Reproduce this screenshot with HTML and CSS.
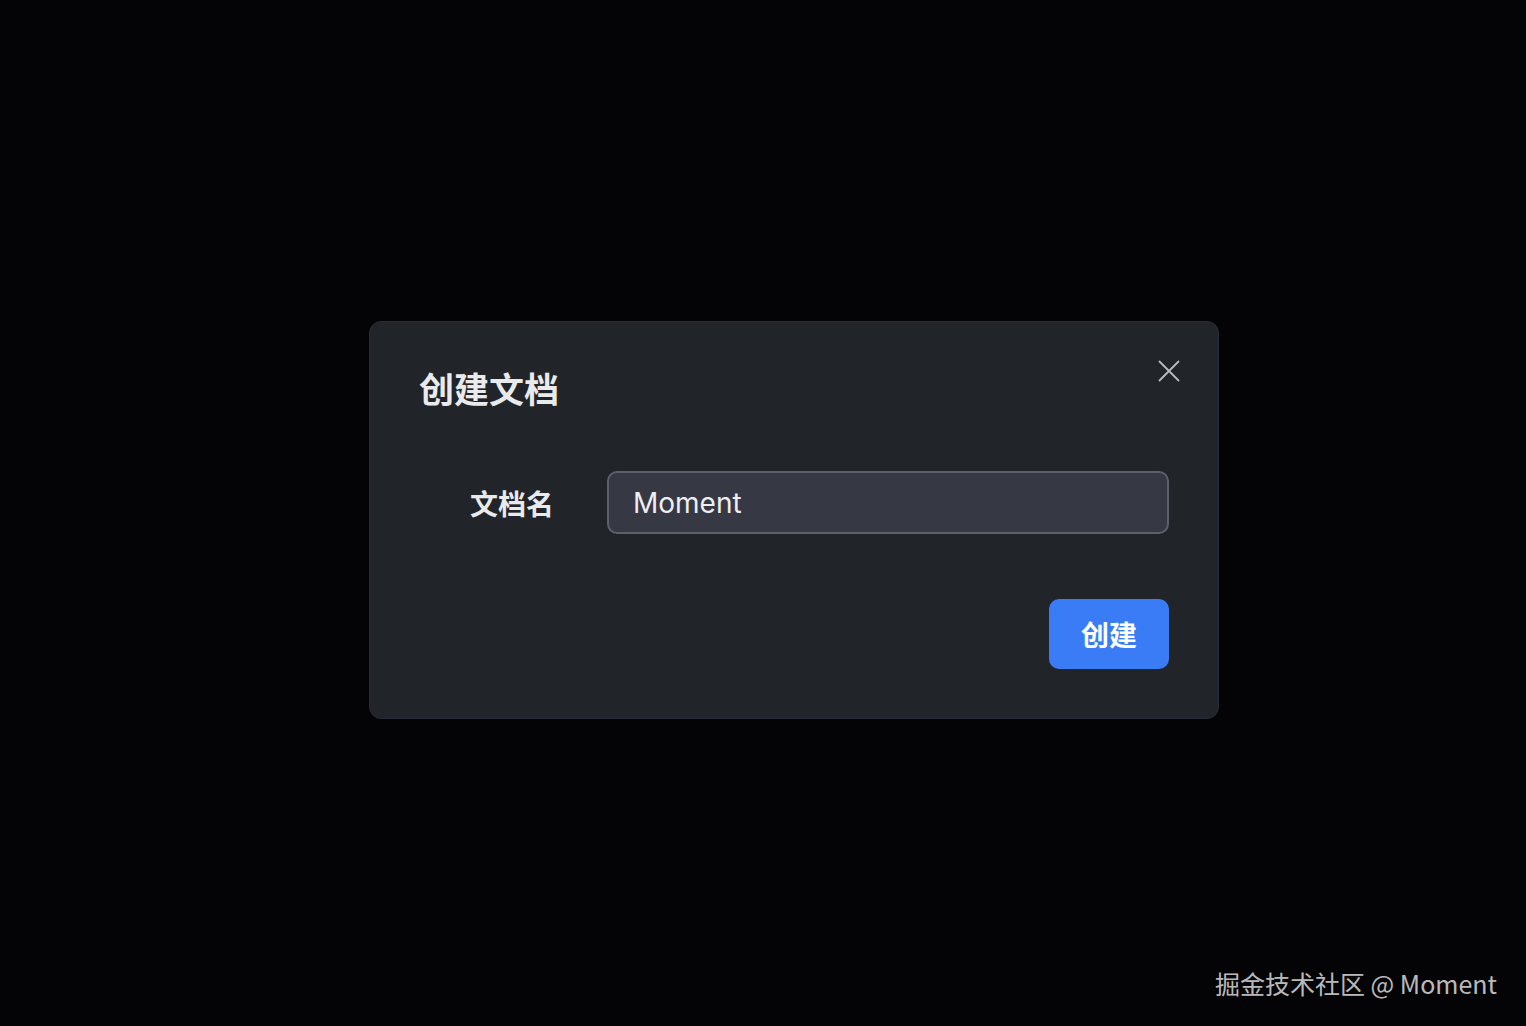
FILE: index.html
```html
<!DOCTYPE html>
<html lang="zh-CN">
<head>
<meta charset="utf-8">
<title>创建文档</title>
<link rel="stylesheet" href="styles.css">
</head>
<body>
<div class="stage">
  <div class="dialog">
    <div class="dialog-header">
      <h2 class="dialog-title">创建文档</h2>
      <button class="close-btn" aria-label="关闭">
        <svg width="24" height="24" viewBox="0 0 24 24" fill="none" stroke="#b9bbc0" stroke-width="1.8" stroke-linecap="round">
          <path d="M2.5 2.5 L21.5 21.5 M21.5 2.5 L2.5 21.5"/>
        </svg>
      </button>
    </div>
    <div class="form-row">
      <label class="form-label" for="docname">文档名</label>
      <input class="form-input" id="docname" type="text" value="Moment">
    </div>
    <div class="dialog-footer">
      <button class="primary-btn">创建</button>
    </div>
  </div>
</div>
<div class="watermark">掘金技术社区 @ Moment</div>
</body>
</html>
```
FILE: styles.css
```css
html, body {
  margin: 0;
  padding: 0;
  height: 100%;
  background: #040407;
  font-family: "Noto Sans CJK SC", "Noto Sans", sans-serif;
  overflow: hidden;
}

.stage {
  padding-top: 321px;
  padding-left: 369px;
}

.dialog {
  box-sizing: border-box;
  width: 850px;
  height: 398px;
  background: #212428;
  border: 1px solid #282a38;
  border-radius: 12px;
  padding: 46px 49px 0 49px;
  display: flex;
  flex-direction: column;
}

.dialog-header {
  display: flex;
  justify-content: space-between;
  align-items: flex-start;
}

.dialog-title {
  margin: 0;
  font-size: 35px;
  line-height: 40px;
  font-weight: 700;
  color: #e9eaec;
}

.close-btn {
  width: 24px;
  height: 24px;
  margin-top: -9px;
  margin-right: -12px;
  padding: 0;
  border: 0;
  background: none;
  cursor: pointer;
  display: flex;
}

.form-row {
  margin-top: 63px;
  display: flex;
  align-items: center;
  gap: 53px;
}

.form-label {
  width: 135px;
  text-align: right;
  font-size: 28px;
  font-weight: 700;
  color: #e9eaec;
}

.form-input {
  flex: 1;
  box-sizing: border-box;
  height: 63px;
  padding: 0 24px;
  background: #363943;
  border: 2px solid #5d6068;
  border-radius: 10px;
  color: #eceef2;
  font-family: Inter, "Noto Sans", sans-serif;
  font-size: 28px;
  outline: none;
}

.dialog-footer {
  margin-top: 65px;
  display: flex;
  justify-content: flex-end;
}

.primary-btn {
  width: 120px;
  height: 70px;
  border: 0;
  border-radius: 10px;
  background: #3a7cf6;
  color: #ffffff;
  font-family: "Noto Sans CJK SC", sans-serif;
  font-size: 28px;
  font-weight: 700;
  cursor: pointer;
}

.watermark {
  position: absolute;
  right: 29px;
  bottom: 27px;
  font-size: 25px;
  line-height: 32px;
  color: rgba(255, 255, 255, 0.74);
}
```
